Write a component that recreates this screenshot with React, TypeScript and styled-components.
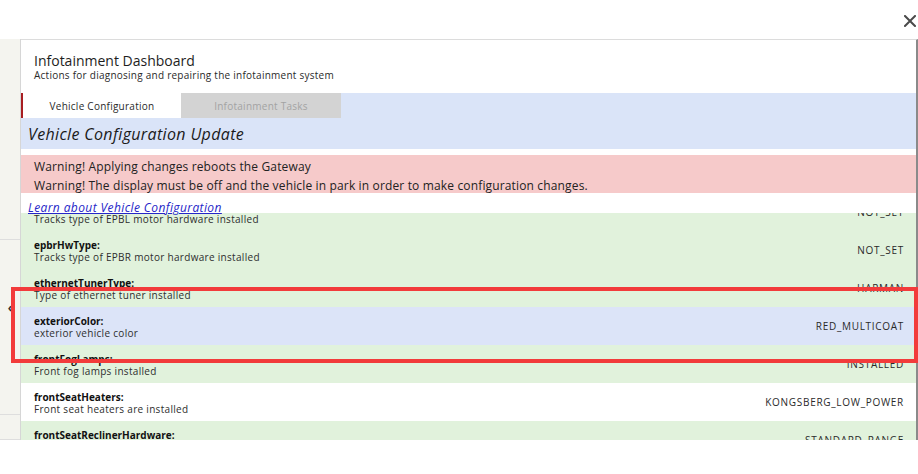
import React, { useEffect, useRef } from 'react';
import styled, { createGlobalStyle } from 'styled-components';

const GlobalStyle = createGlobalStyle`
  html, body {
    margin: 0;
    padding: 0;
    background: #fff;
  }
  body {
    font-family: "Open Sans", "Liberation Sans", sans-serif;
    color: #222;
  }
`;

const Page = styled.div`
  position: relative;
  width: 918px;
  height: 474px;
  overflow: hidden;
  display: flex;
  flex-direction: column;
  background: #fff;
`;

const TopBar = styled.div`
  height: 39px;
  display: flex;
  justify-content: flex-end;
  align-items: flex-start;
  padding: 14px 1px 0 0;
  box-sizing: border-box;
`;

const CloseButton = styled.button`
  width: 14px;
  height: 14px;
  padding: 0;
  border: none;
  background: transparent;
  display: flex;
  align-items: center;
  justify-content: center;
  cursor: pointer;
`;

const Body = styled.div`
  height: 401px;
  display: flex;
`;

const SideRail = styled.div`
  width: 20px;
  background: #f4f4ef;
  border-right: 1px solid #d6d6d6;
  display: flex;
  flex-direction: column;
`;

const RailSegment = styled.div<{ $h: number; $pad?: number }>`
  height: ${p => p.$h}px;
  border-bottom: 1px solid #dedede;
  box-sizing: border-box;
  display: flex;
  justify-content: center;
  padding-top: ${p => p.$pad ?? 0}px;
  color: #333;
  font-size: 12px;
  font-weight: 700;
  line-height: 12px;
`;

const Modal = styled.div`
  flex: 1;
  display: flex;
  flex-direction: column;
  border-top: 1px solid #dcdcdc;
  border-right: 2px solid #8a8a8a;
  box-sizing: border-box;
  min-width: 0;
`;

const Header = styled.div`
  height: 53px;
  padding: 13px 13px 0;
  box-sizing: border-box;
`;

const Title = styled.div`
  font-size: 14px;
  line-height: 16px;
  color: #1e1e1e;
`;

const Subtitle = styled.div`
  font-size: 10px;
  line-height: 12px;
  letter-spacing: 0.25px;
  color: #2a2a2a;
`;

const TabBar = styled.div`
  height: 25px;
  display: flex;
  background: #dae4f8;
`;

const Tab = styled.div<{ $active?: boolean }>`
  width: 160px;
  display: flex;
  align-items: center;
  justify-content: center;
  font-size: 10px;
  letter-spacing: 0.25px;
  box-sizing: border-box;
  background: ${p => (p.$active ? '#fff' : '#d3d3d3')};
  color: ${p => (p.$active ? '#2a2a2a' : '#a3a3a3')};
  border-left: ${p => (p.$active ? '2px solid #a81e22' : 'none')};
`;

const SectionTitle = styled.div`
  height: 31px;
  display: flex;
  align-items: center;
  padding-left: 7px;
  background: #dae4f8;
  font-size: 16px;
  letter-spacing: 0.35px;
  font-style: italic;
  color: #1a1a1a;
`;

const Spacer = styled.div`
  height: 6px;
`;

const Warning = styled.div`
  height: 38px;
  background: #f6caca;
  padding: 2px 13px 0;
  box-sizing: border-box;
  font-size: 12px;
  letter-spacing: 0.15px;
  line-height: 19px;
  color: #222;
`;

const LinkRow = styled.div`
  height: 20px;
  padding: 2px 0 0 7px;
  box-sizing: border-box;
  position: relative;
  z-index: 1;
`;

const LearnLink = styled.a`
  font-size: 12px;
  line-height: 14px;
  letter-spacing: 0.4px;
  font-style: italic;
  color: #2626c8;
  text-decoration: underline;
`;

const ListViewport = styled.div`
  flex: 1;
  overflow: hidden;
  background: #e1f2dc;
`;

const Row = styled.div<{ $tone: 'green' | 'blue' | 'white' }>`
  height: 38px;
  display: flex;
  align-items: center;
  padding: 0 12px 0 13px;
  box-sizing: border-box;
  background: ${p =>
    p.$tone === 'blue' ? '#dce4f8' : p.$tone === 'white' ? '#fff' : '#e1f2dc'};
`;

const RowText = styled.div`
  flex: 1;
  display: flex;
  flex-direction: column;
  padding-top: 1px;
`;

const Key = styled.div`
  font-size: 10px;
  line-height: 12px;
  font-weight: 700;
  color: #111;
`;

const Description = styled.div`
  font-size: 10px;
  line-height: 12px;
  letter-spacing: 0.3px;
  color: #2e2e2e;
`;

const Value = styled.div`
  font-size: 10px;
  letter-spacing: 0.7px;
  color: #2a2a2a;
`;

const Highlight = styled.div`
  position: absolute;
  left: 11px;
  top: 287px;
  width: 907px;
  height: 76px;
  border: 4px solid #f23b3b;
  box-sizing: border-box;
  pointer-events: none;
`;

type Setting = {
  key: string;
  description: string;
  value: string;
  tone: 'green' | 'blue' | 'white';
};

const settings: Setting[] = [
  { key: 'epblHwType:', description: 'Tracks type of EPBL motor hardware installed', value: 'NOT_SET', tone: 'green' },
  { key: 'epbrHwType:', description: 'Tracks type of EPBR motor hardware installed', value: 'NOT_SET', tone: 'green' },
  { key: 'ethernetTunerType:', description: 'Type of ethernet tuner installed', value: 'HARMAN', tone: 'green' },
  { key: 'exteriorColor:', description: 'exterior vehicle color', value: 'RED_MULTICOAT', tone: 'blue' },
  { key: 'frontFogLamps:', description: 'Front fog lamps installed', value: 'INSTALLED', tone: 'green' },
  { key: 'frontSeatHeaters:', description: 'Front seat heaters are installed', value: 'KONGSBERG_LOW_POWER', tone: 'white' },
  { key: 'frontSeatReclinerHardware:', description: 'Front seat recliner hardware type', value: 'STANDARD_RANGE', tone: 'green' },
  { key: 'frontSeatType:', description: 'Front seat type installed', value: 'STANDARD', tone: 'green' },
];

const CloseIcon = () => (
  <svg width="12" height="12" viewBox="0 0 12 12">
    <path d="M1 1 L11 11 M11 1 L1 11" stroke="#4a4a4a" strokeWidth="2" strokeLinecap="square" />
  </svg>
);

const App = () => {
  const listRef = useRef<HTMLDivElement>(null);

  // the list is already scrolled a little past its first entry
  useEffect(() => {
    if (listRef.current) listRef.current.scrollTop = 20;
  }, []);

  return (
    <Page>
      <GlobalStyle />
      <TopBar>
        <CloseButton aria-label="Close">
          <CloseIcon />
        </CloseButton>
      </TopBar>
      <Body>
        <SideRail>
          <RailSegment $h={201} />
          <RailSegment $h={175} $pad={62}>‹</RailSegment>
          <RailSegment $h={25} />
        </SideRail>
        <Modal>
          <Header>
            <Title>Infotainment Dashboard</Title>
            <Subtitle>Actions for diagnosing and repairing the infotainment system</Subtitle>
          </Header>
          <TabBar>
            <Tab $active>Vehicle Configuration</Tab>
            <Tab>Infotainment Tasks</Tab>
          </TabBar>
          <SectionTitle>Vehicle Configuration Update</SectionTitle>
          <Spacer />
          <Warning>
            <div>Warning! Applying changes reboots the Gateway</div>
            <div>Warning! The display must be off and the vehicle in park in order to make configuration changes.</div>
          </Warning>
          <LinkRow>
            <LearnLink href="#">Learn about Vehicle Configuration</LearnLink>
          </LinkRow>
          <ListViewport ref={listRef}>
            {settings.map(s => (
              <Row key={s.key} $tone={s.tone}>
                <RowText>
                  <Key>{s.key}</Key>
                  <Description>{s.description}</Description>
                </RowText>
                <Value>{s.value}</Value>
              </Row>
            ))}
          </ListViewport>
        </Modal>
      </Body>
      <Highlight />
    </Page>
  );
};

export default App;
